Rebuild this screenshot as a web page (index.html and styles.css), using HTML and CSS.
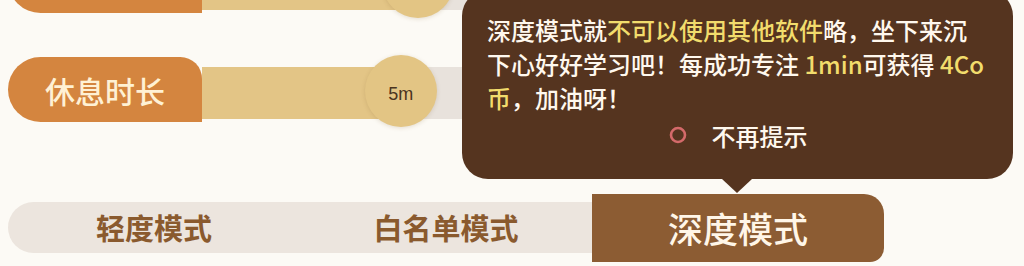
FILE: index.html
```html
<!DOCTYPE html>
<html lang="zh-CN">
<head>
<meta charset="utf-8">
<link rel="stylesheet" href="styles.css">
</head>
<body>
<div class="page">
  <div class="rows">
    <div class="row">
      <div class="label"></div>
      <div class="track">
        <div class="fill" style="width:27.1%"></div>
        <div class="knob" style="left:27.1%"></div>
      </div>
    </div>
    <div class="row">
      <div class="label">休息时长</div>
      <div class="track">
        <div class="fill" style="width:24.9%"></div>
        <div class="knob" style="left:24.9%">5m</div>
      </div>
    </div>
  </div>

  <div class="tabs">
    <div class="tab">轻度模式</div>
    <div class="tab">白名单模式</div>
    <div class="tab active">深度模式</div>
  </div>

  <div class="tip">
    <p class="tip-text">深度模式就<span class="hl">不可以使用其他软件</span>略，坐下来沉<br>下心好好学习吧！每成功专注 <span class="hl">1min</span>可获得 <span class="hl">4Co</span><br><span class="hl">币</span>，加油呀！</p>
    <div class="tip-check">
      <svg class="check-icon" width="20" height="20" viewBox="0 0 20 20"><circle cx="10" cy="10" r="7" fill="none" stroke="#d46a6a" stroke-width="2.6"/></svg>
      <span>不再提示</span>
    </div>
  </div>
</div>
</body>
</html>
```

FILE: styles.css
```css
html, body {
  margin: 0;
  padding: 0;
}
body {
  background: #fcfaf5;
  font-family: "Noto Sans CJK SC", "Noto Sans", sans-serif;
  width: 1024px;
  height: 266px;
  overflow: hidden;
}
.page {
  position: relative;
  display: flow-root;
  width: 1024px;
  height: 266px;
}
.rows {
  display: flex;
  flex-direction: column;
  gap: 44px;
  margin-top: -52px;
  padding-left: 8px;
}
.row {
  display: flex;
  align-items: flex-start;
  height: 65px;
}
.label {
  width: 194px;
  height: 65px;
  flex: none;
  background: #d4853f;
  border-radius: 33px 22px 0 33px;
  color: #fff1d4;
  font-size: 30px;
  font-weight: 500;
  display: flex;
  align-items: center;
  justify-content: center;
  line-height: 1;
}
.track {
  position: relative;
  width: 798px;
  height: 52px;
  margin-top: 10px;
  background: #e8e2dc;
}
.fill {
  height: 100%;
  background: #e3c586;
}
.knob {
  position: absolute;
  top: -12px;
  width: 72px;
  height: 72px;
  margin-left: -36px;
  border-radius: 50%;
  background: #e3c584;
  box-shadow: 0 1px 4px rgba(120, 90, 40, 0.18);
  display: flex;
  align-items: center;
  justify-content: center;
  padding-top: 6px;
  box-sizing: border-box;
  font-family: "Liberation Sans", Arial, sans-serif;
  font-size: 18px;
  color: #4a3420;
}
.tabs {
  display: flex;
  align-items: center;
  width: 876px;
  height: 51px;
  margin: 80px 0 0 8px;
  background: #ece5de;
  border-radius: 26px;
}
.tab {
  width: 292px;
  height: 51px;
  display: flex;
  align-items: center;
  justify-content: center;
  font-size: 29px;
  font-weight: 700;
  color: #8a5a2e;
  line-height: 1;
}
.tab.active {
  height: 68px;
  background: #8c5c33;
  border-radius: 0 20px 14px 0;
  color: #fff6e8;
  font-size: 35px;
  font-weight: 500;
}
.tip {
  position: absolute;
  left: 462px;
  top: -10px;
  width: 551px;
  box-sizing: border-box;
  padding: 23px 20px 27px 25px;
  background: #55341f;
  border-radius: 26px;
  color: #fff8ee;
}
.tip::after {
  content: "";
  position: absolute;
  left: 260px;
  bottom: -14px;
  border-left: 15px solid transparent;
  border-right: 15px solid transparent;
  border-top: 14px solid #55341f;
}
.tip-text {
  margin: 0;
  font-size: 24px;
  font-weight: 500;
  line-height: 34px;
  white-space: nowrap;
}
.hl {
  color: #f2dc6c;
}
.tip-check {
  display: flex;
  align-items: center;
  justify-content: center;
  gap: 24px;
  margin-top: 3px;
  margin-left: -5px;
  height: 34px;
  font-size: 24px;
  font-weight: 500;
}
.check-icon {
  display: block;
}
```
